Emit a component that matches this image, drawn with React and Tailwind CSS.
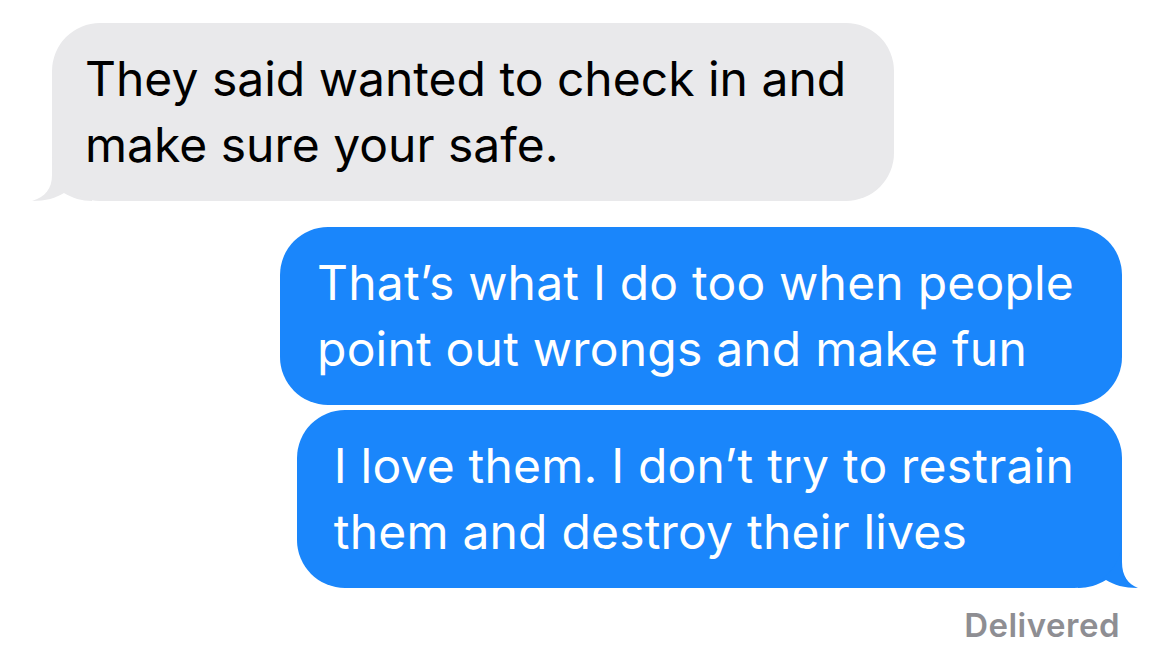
export default function App() {
    const font = { fontFamily: 'Inter, "Noto Sans", sans-serif' };

    return (
        <div className="min-h-[666px] w-[1170px] bg-white" style={font}>
            <div className="flex flex-col pt-[23px]">
                {/* incoming */}
                <div className="flex pl-[52px]">
                    <div className="relative">
                        <svg className="absolute bottom-0 left-[-20px]" width="60" height="50" viewBox="0 0 60 50">
                            <path d="M20 0 L20 24 C20 38 13 46 0 50 C14 50 24 47 32 42 C40 47 50 50 60 50 L60 0 Z" fill="#e9e9eb" />
                        </svg>
                        <div className="relative rounded-[48px] bg-[#e9e9eb] py-[23px] pl-[33px] pr-[48px] text-[48px] leading-[66px] text-black">
                            They said wanted to check in and<br />
                            make sure your safe.
                        </div>
                    </div>
                </div>

                {/* outgoing */}
                <div className="mt-[26px] flex flex-col items-end gap-[5px] pr-[48px]">
                    <div className="rounded-[48px] bg-[#1a86fb] py-[23px] pl-[37px] pr-[48px] text-[48px] leading-[66px] tracking-[0.2px] text-white">
                        That’s what I do too when people<br />
                        point out wrongs and make fun
                    </div>
                    <div className="relative">
                        <svg className="absolute bottom-0 right-[-16px]" width="60" height="50" viewBox="0 0 60 50">
                            <path d="M44 0 L44 24 C44 38 50 46 60 50 C46 50 36 47 28 42 C20 47 10 50 0 50 L0 0 Z" fill="#1a86fb" />
                        </svg>
                        <div className="relative rounded-[48px] bg-[#1a86fb] py-[23px] pl-[37px] pr-[48px] text-[48px] leading-[66px] tracking-[0.2px] text-white">
                            I love them. I don’t try to restrain<br />
                            them and destroy their lives
                        </div>
                    </div>
                    <div className="mt-[8px] pr-[2px] text-[33px] font-semibold tracking-[0.5px] text-[#8e8e93]">Delivered</div>
                </div>
            </div>
        </div>
    );
}
